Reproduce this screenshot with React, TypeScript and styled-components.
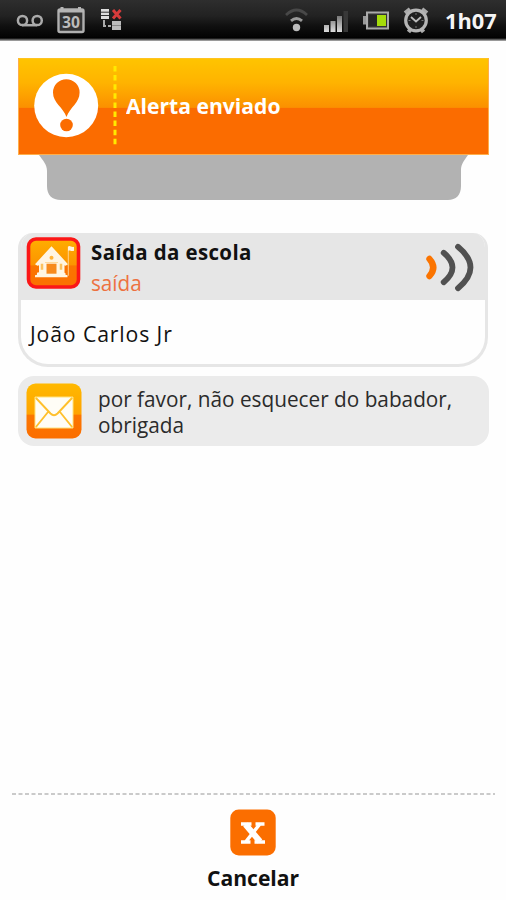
import React from 'react';
import styled, { createGlobalStyle } from 'styled-components';

const GlobalStyle = createGlobalStyle`
  * { box-sizing: border-box; }
  body { margin: 0; background: #fefefe; font-family: "Open Sans", "Noto Sans", sans-serif; }
`;

const Screen = styled.div`
  display: flex;
  flex-direction: column;
  width: 506px;
  height: 900px;
  background: #fefefe;
  overflow: hidden;
`;

const StatusBar = styled.header`
  display: flex;
  justify-content: space-between;
  height: 41px;
  flex: none;
  background: linear-gradient(#2e2e2e 0, #222 16px, #101010 26px, #040404 37px, #000 38px, #777 40px, #bbb 41px);
`;

const StatusIcons = styled.svg`
  display: block;
  flex: none;
`;

const StatusRight = styled.div`
  display: flex;
`;

const Label = styled.span<{ $line: number; $stretch?: number; $spacing?: number; $origin?: string; $bold?: boolean; $color?: string }>`
  display: block;
  margin: 0;
  font-size: 22px;
  line-height: ${p => p.$line}px;
  letter-spacing: ${p => p.$spacing ?? 0}px;
  font-weight: ${p => (p.$bold ? 700 : 400)};
  color: ${p => p.$color ?? '#111'};
  white-space: nowrap;
  transform: scaleX(${p => p.$stretch ?? 1});
  transform-origin: ${p => p.$origin ?? 'left'};
`;

const Clock = styled.div`
  width: 61px;
  padding-top: 5px;
`;

const Banner = styled.section`
  display: flex;
  align-items: center;
  flex: none;
  height: 97px;
  margin: 17px 17px 0 18px;
  padding: 0 0 2px 15px;
  border: 1px solid #ffae4a;
  border-top-color: #ffc31f;
  background: linear-gradient(#ffc400 0, #ffb300 25%, #fb9000 51%, #fb6c00 51.5%, #fb6c00 100%);
`;

const BannerTitle = styled.div`
  padding-bottom: 2px;
`;

const Divider = styled.svg`
  display: block;
  margin: 0 9px 0 14px;
`;

const Tray = styled.svg`
  display: block;
  flex: none;
  margin-left: 38px;
`;

const Card = styled.section`
  flex: none;
  height: 134px;
  margin: 33px 18px 0;
  border: 3px solid #e6e6e6;
  border-top: 0;
  border-radius: 15px 15px 30px 30px;
  overflow: hidden;
`;

const CardHeader = styled.div`
  display: flex;
  height: 67px;
  padding: 3px 10px 0 5px;
  background: #e6e6e6;
`;

const CardTitles = styled.div`
  flex: 1;
  padding-left: 10px;
`;

const CardBody = styled.div`
  padding: 18px 0 0 9px;
`;

const Message = styled.section`
  display: flex;
  flex: none;
  height: 70px;
  margin: 9px 17px 0 18px;
  padding: 7px 8px;
  border-radius: 16px;
  background: #ebebeb;
`;

const MessageText = styled.div`
  padding: 2px 0 0 16px;
`;

const Footer = styled.footer`
  display: flex;
  flex-direction: column;
  margin: auto 11px 0 12px;
  height: 107px;
  flex: none;
`;

const CancelButton = styled.button`
  display: flex;
  flex-direction: column;
  align-items: center;
  align-self: center;
  gap: 6px;
  padding: 0;
  margin-top: 14px;
  border: 0;
  background: none;
  font-family: inherit;
`;

const Icon = styled.svg`
  display: block;
  flex: none;
`;

function LeftStatus() {
  return (
    <StatusIcons width="130" height="40" fill="none">
      <g stroke="#aaa" strokeWidth="2.5">
        <circle cx="22.5" cy="20.5" r="4.6" />
        <circle cx="37.2" cy="20.5" r="4.6" />
        <path d="M22 25.2h15" />
      </g>
      <rect x="58.5" y="9.500" width="25" height="22.5" rx="1.5" fill="#333" stroke="#b0b0b0" strokeWidth="2.4" />
      <path d="M58 11h26M62 7v4M79.500 7v4" stroke="#b5b5b5" strokeWidth="3" />
      <text x="62" y="27.500" fontFamily="Open Sans" fontWeight="700" fontSize="16" textLength="18" lengthAdjust="spacingAndGlyphs" fill="#bbb">30</text>
      <path d="M101 9h8v10h-8z" fill="#ddd" />
      <path d="M101 12.200h8M101 15.500h8" stroke="#333" />
      <path d="m113 10 7.500 8.500m0-8.500-7.500 8.500" stroke="#d83b3b" strokeWidth="3" />
      <path d="M104 20v7M108 26h3M104 26h2" stroke="#aaa" strokeWidth="2" />
      <path d="M112 21h9v9h-9z" fill="#bbb" />
      <path d="M112 25.500h9" stroke="#888" />
    </StatusIcons>
  );
}

function RightStatus() {
  return (
    <StatusIcons width="161" height="40" viewBox="-1 0 161 40" fill="none">
      <defs>
        <linearGradient id="bars" x1="0" x2="0" y1="0" y2="1">
          <stop stopColor="#777" />
          <stop offset="1" stopColor="#ddd" />
        </linearGradient>
      </defs>
      <path d="M1 15q10.500-10 21 0" stroke="#484848" strokeWidth="2.800" />
      <path d="M6 20.800q5.500-4.500 11 0" stroke="#999" strokeWidth="3" />
      <circle cx="11.500" cy="27.500" r="3.700" fill="#bbb" />
      <path d="M39 25h5v7h-5zM45.500 21h5v11h-5zM52 16h5v16h-5z" fill="url(#bars)" />
      <path d="M58.500 11h4.500v21h-4.500z" fill="#383838" />
      <rect x="82" y="12.500" width="21" height="16" fill="#333" stroke="#aaa" strokeWidth="2" />
      <path d="M79.500 16v8.500" stroke="#999" strokeWidth="3" />
      <path d="M84 15h8v11h-8z" fill="#262626" />
      <path d="M92 15h9v11h-9z" fill="#a5dc0a" />
      <g transform="translate(-3.500)">
        <path d="m123.500 13 5-4M145.500 13l-5-4M127 32l3-4M142 32l-3-4" stroke="#aaa" strokeWidth="4" />
        <circle cx="134.500" cy="20.500" r="10.300" fill="#202020" stroke="#b5b5b5" strokeWidth="3.200" />
        <path d="m129.500 17 5 4.500 5-4.500" stroke="#bbb" strokeWidth="1.800" />
        <path d="M134.500 13v2M134.500 26v2M127 20.500h2M140 20.500h2" stroke="#777" />
      </g>
    </StatusIcons>
  );
}

function AlertIcon() {
  return (
    <Icon width="65" height="65" viewBox="0 0 65 65">
      <ellipse cx="32.200" cy="32.500" rx="32" ry="31.700" fill="#fff" />
      <path d="M32.500 44C29 34 19 30 19 19.500a13.300 13.300 0 0 1 26.600 0C45.600 30 36 34 32.500 44Z" fill="#fb7200" />
      <circle cx="32.500" cy="52" r="6.300" fill="#fb6c00" />
    </Icon>
  );
}

function SchoolIcon() {
  return (
    <Icon width="55" height="53" viewBox="0 -0.700 55 53">
      <defs>
        <linearGradient id="school" x1="0" x2="0" y1="0" y2="1">
          <stop stopColor="#ffae00" />
          <stop offset=".54" stopColor="#fc9400" />
          <stop offset=".56" stopColor="#fb7500" />
          <stop offset="1" stopColor="#fb7000" />
        </linearGradient>
      </defs>
      <rect x="2.500" y="2.300" width="50" height="48" rx="7.500" fill="url(#school)" stroke="#fb1717" strokeWidth="3.600" />
      <path d="M9 27.500 25.500 9.500 42 27.500l-2.500 1.500-1-.5v7.500l1 .5v1.500l2 .5v2H9v-2l2-.5v-2l2-.5v-7l-1.500.5z" fill="#fff5e2" />
      <path d="M20.500 27h10v10h-10z" fill="#f78a1c" />
      <path d="M19 25.800h13" stroke="#ffd99a" />
      <circle cx="25.500" cy="21" r="2" fill="#ffb43a" />
      <path d="M16 27v6M35 27v6" stroke="#fcc25e" strokeWidth="2.500" />
      <path d="M42.300 10v29" stroke="#ffd08a" strokeWidth="1" />
      <path d="M42 10c2-2 3 1 6 0v4c-3 1-4-1-6 0z" fill="#fff3df" />
    </Icon>
  );
}

function SignalWaves() {
  return (
    <Icon width="50" height="58" viewBox="0 0 50 58" fill="none" strokeLinecap="round">
      <path d="M4.500 23q7.500 8.500 0 17" stroke="#fb7400" strokeWidth="6.400" />
      <path d="M18.700 16.800q17.600 14.700 0 29.400" stroke="#515151" strokeWidth="5.800" />
      <path d="M33 10.800q25 20.700 0 41.400" stroke="#515151" strokeWidth="5.800" />
    </Icon>
  );
}

function MailIcon() {
  return (
    <Icon width="56" height="56" viewBox="0 0 56 56">
      <defs>
        <linearGradient id="mail" x1="0" x2="0" y1="0" y2="1">
          <stop stopColor="#ffb900" />
          <stop offset=".56" stopColor="#ffa300" />
          <stop offset=".57" stopColor="#fc7600" />
          <stop offset="1" stopColor="#fb6e00" />
        </linearGradient>
      </defs>
      <rect x=".5" y=".5" width="55" height="55" rx="9" fill="url(#mail)" />
      <rect x="9" y="14" width="38" height="31" fill="#fffdf6" />
      <path d="m9.500 14.500 15 16q3.500 3.500 7 0l15-16M9.500 44.500 22 29M46.500 44.500 34 29" fill="none" stroke="#ffc02c" strokeWidth="1.900" />
      <path d="M9 14h38v31H9z" fill="none" stroke="#ffe27d" strokeWidth="1" />
    </Icon>
  );
}

function CloseIcon() {
  return (
    <Icon width="46" height="47" viewBox="0 0 46 47">
      <rect x=".3" y=".5" width="45.400" height="46" rx="8.500" fill="#fb6e00" />
      <g fill="none" stroke="#fff">
        <path d="m15.500 15.500 14.500 17" strokeWidth="6" />
        <path d="m29.500 15.500-13.500 17" strokeWidth="3.500" />
        <path d="M11 15h10.500M25.500 15h9M11 33h9.500M24.500 33h10.500" strokeWidth="3.600" />
      </g>
    </Icon>
  );
}

export default function App() {
  return (
    <>
      <GlobalStyle />
      <Screen>
        <StatusBar>
          <LeftStatus />
          <StatusRight>
            <RightStatus />
            <Clock>
              <Label $line={30} $bold $stretch={0.99} $color="#f5f5f5">1h07</Label>
            </Clock>
          </StatusRight>
        </StatusBar>
        <Banner>
          <AlertIcon />
          <Divider width="4" height="79">
            <path d="M2 0v79" stroke="#ffea00" strokeWidth="3" strokeDasharray="5.500 3.600" />
          </Divider>
          <BannerTitle>
            <Label $line={30} $bold $stretch={0.96} $color="#fff">Alerta enviado</Label>
          </BannerTitle>
        </Banner>
        <Tray width="432" height="45" viewBox="0 0 432 45">
          <path d="M1 0h429c-4 6-7 9-7 15v16c0 9-5 14-13 14H23C14 45 9 40 9 31V16C9 9 5 6 1 0Z" fill="#b2b2b2" />
        </Tray>
        <Card>
          <CardHeader>
            <SchoolIcon />
            <CardTitles>
              <Label $line={31} $bold $stretch={0.93} $spacing={0.4}>Saída da escola</Label>
              <Label $line={31} $stretch={0.94} $color="#ed7140">saída</Label>
            </CardTitles>
            <SignalWaves />
          </CardHeader>
          <CardBody>
            <Label $line={30} $stretch={0.965} $spacing={0.9}>João Carlos Jr</Label>
          </CardBody>
        </Card>
        <Message>
          <MailIcon />
          <MessageText>
            <Label as="p" $line={26} $stretch={0.944} $color="#2b2b2b">
              por favor, não esquecer do babador,<br />obrigada
            </Label>
          </MessageText>
        </Message>
        <Footer>
          <Icon width="483" height="2">
            <path d="M0 1h483" stroke="#b9b9b9" strokeWidth="1.500" strokeDasharray="4 2.500" />
          </Icon>
          <CancelButton>
            <CloseIcon />
            <Label $line={30} $bold $stretch={0.96} $origin="center">Cancelar</Label>
          </CancelButton>
        </Footer>
      </Screen>
    </>
  );
}
